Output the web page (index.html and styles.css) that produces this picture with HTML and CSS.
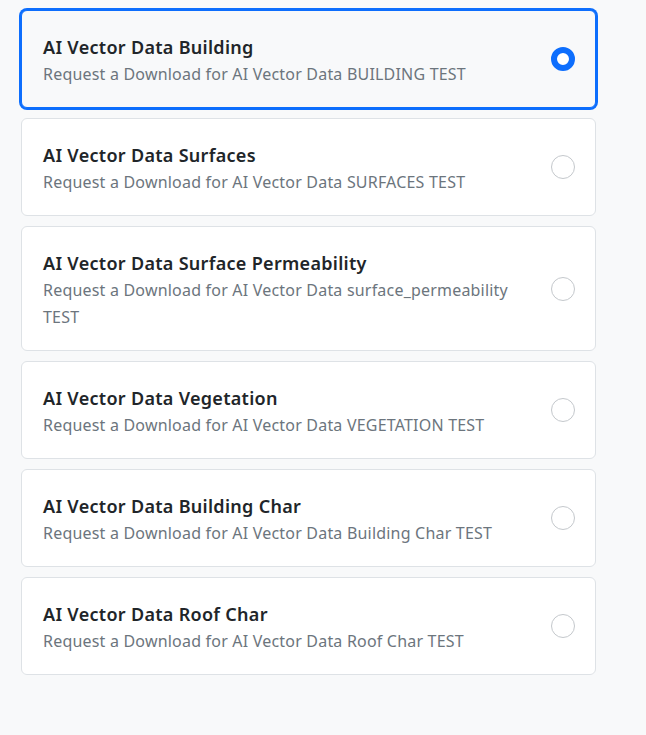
FILE: index.html
```html
<!DOCTYPE html>
<html lang="en">
<head>
<meta charset="utf-8">
<title>AI Vector Data</title>
<link rel="stylesheet" href="styles.css">
</head>
<body>
<div class="list">
  <label class="card selected">
    <div class="text">
      <div class="title">AI Vector Data Building</div>
      <div class="desc">Request a Download for AI Vector Data BUILDING TEST</div>
    </div>
    <span class="radio on"></span>
  </label>
  <label class="card">
    <div class="text">
      <div class="title">AI Vector Data Surfaces</div>
      <div class="desc">Request a Download for AI Vector Data SURFACES TEST</div>
    </div>
    <span class="radio"></span>
  </label>
  <label class="card">
    <div class="text">
      <div class="title">AI Vector Data Surface Permeability</div>
      <div class="desc">Request a Download for AI Vector Data surface_permeability TEST</div>
    </div>
    <span class="radio"></span>
  </label>
  <label class="card">
    <div class="text">
      <div class="title">AI Vector Data Vegetation</div>
      <div class="desc">Request a Download for AI Vector Data VEGETATION TEST</div>
    </div>
    <span class="radio"></span>
  </label>
  <label class="card">
    <div class="text">
      <div class="title">AI Vector Data Building Char</div>
      <div class="desc">Request a Download for AI Vector Data Building Char TEST</div>
    </div>
    <span class="radio"></span>
  </label>
  <label class="card">
    <div class="text">
      <div class="title">AI Vector Data Roof Char</div>
      <div class="desc">Request a Download for AI Vector Data Roof Char TEST</div>
    </div>
    <span class="radio"></span>
  </label>
</div>
</body>
</html>
```

FILE: styles.css
```css
html, body {
  margin: 0;
  padding: 0;
  background: #f8f9fa;
}
body {
  font-family: "Noto Sans", "Open Sans", sans-serif;
  color: #212529;
}
.list {
  width: 575px;
  padding: 10px 0 0 21px;
  display: flex;
  flex-direction: column;
  gap: 10px;
}
.card {
  box-sizing: border-box;
  display: flex;
  align-items: center;
  justify-content: space-between;
  padding: 23px 20px 19px 21px;
  background: #fff;
  border: 1px solid #dee2e6;
  border-radius: 6px;
}
.card.selected {
  background: #f8f9fa;
  border-color: #0d6efd;
  box-shadow: 0 0 0 2px #0d6efd;
}
.text { flex: 1; padding-right: 30px; }
.title {
  font-size: 18px;
  font-weight: 600;
  line-height: 27px;
  letter-spacing: 0.3px;
}
.desc {
  font-size: 16px;
  line-height: 27px;
  letter-spacing: 0.2px;
  color: #6c757d;
}
.radio {
  flex: none;
  width: 24px;
  height: 24px;
  margin-bottom: 4px;
  box-sizing: border-box;
  border-radius: 50%;
  border: 1px solid #c4c8cc;
  background: #fff;
}
.radio.on {
  border: 6px solid #0d6efd;
  background: #fff;
}
```
